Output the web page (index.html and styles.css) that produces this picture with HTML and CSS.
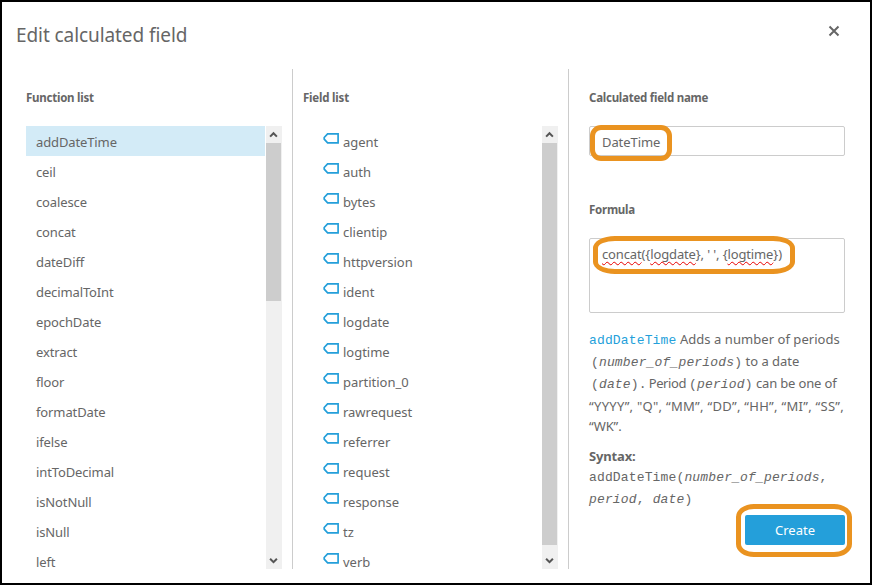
FILE: index.html
```html
<!DOCTYPE html>
<html lang="en">
<head>
<meta charset="utf-8">
<title>Edit calculated field</title>
<link rel="stylesheet" href="styles.css">
</head>
<body>
<svg class="defs" width="0" height="0">
  <symbol id="tag" viewBox="0 0 17 12"><path d="M4.6 1.8H15.1V10.9H4.6L1.2 7.2V5.5Z" fill="#fff" stroke="#249fda" stroke-width="1.7"/></symbol>
  <symbol id="up" viewBox="0 0 16 17"><path d="M4.1 10.6L7.5 7.2L10.9 10.6" fill="none" stroke="#555" stroke-width="2"/></symbol>
  <symbol id="down" viewBox="0 0 16 17"><path d="M4.1 6.7L7.5 10.1L10.9 6.7" fill="none" stroke="#555" stroke-width="2"/></symbol>
</svg>
<main class="dialog">
  <header class="header">
    <h1 class="title">Edit calculated field</h1>
    <svg class="close" width="12" height="12" viewBox="0 0 12 12"><path d="M1.5 1.5L10.5 10.5M10.5 1.5L1.5 10.5" stroke="#666" stroke-width="2"/></svg>
  </header>
  <div class="columns">
    <section class="column functions">
      <h2 class="label">Function list</h2>
      <div class="listbox">
        <ul class="items">
          <li class="item selected">addDateTime</li>
          <li class="item">ceil</li>
          <li class="item">coalesce</li>
          <li class="item">concat</li>
          <li class="item">dateDiff</li>
          <li class="item">decimalToInt</li>
          <li class="item">epochDate</li>
          <li class="item">extract</li>
          <li class="item">floor</li>
          <li class="item">formatDate</li>
          <li class="item">ifelse</li>
          <li class="item">intToDecimal</li>
          <li class="item">isNotNull</li>
          <li class="item">isNull</li>
          <li class="item">left</li>
        </ul>
        <div class="scrollbar"><svg class="arrow"><use href="#up"/></svg><div class="thumb short"></div><svg class="arrow last"><use href="#down"/></svg></div>
      </div>
    </section>
    <section class="column fields">
      <h2 class="label">Field list</h2>
      <div class="listbox">
        <ul class="items">
          <li class="item"><svg class="tag"><use href="#tag"/></svg>agent</li>
          <li class="item"><svg class="tag"><use href="#tag"/></svg>auth</li>
          <li class="item"><svg class="tag"><use href="#tag"/></svg>bytes</li>
          <li class="item"><svg class="tag"><use href="#tag"/></svg>clientip</li>
          <li class="item"><svg class="tag"><use href="#tag"/></svg>httpversion</li>
          <li class="item"><svg class="tag"><use href="#tag"/></svg>ident</li>
          <li class="item"><svg class="tag"><use href="#tag"/></svg>logdate</li>
          <li class="item"><svg class="tag"><use href="#tag"/></svg>logtime</li>
          <li class="item"><svg class="tag"><use href="#tag"/></svg>partition_0</li>
          <li class="item"><svg class="tag"><use href="#tag"/></svg>rawrequest</li>
          <li class="item"><svg class="tag"><use href="#tag"/></svg>referrer</li>
          <li class="item"><svg class="tag"><use href="#tag"/></svg>request</li>
          <li class="item"><svg class="tag"><use href="#tag"/></svg>response</li>
          <li class="item"><svg class="tag"><use href="#tag"/></svg>tz</li>
          <li class="item"><svg class="tag"><use href="#tag"/></svg>verb</li>
        </ul>
        <div class="scrollbar"><svg class="arrow"><use href="#up"/></svg><div class="thumb"></div><svg class="arrow last"><use href="#down"/></svg></div>
      </div>
    </section>
    <section class="column editor">
      <h2 class="label">Calculated field name</h2>
      <div class="box name"><span>DateTime</span><i class="mark mark-name"></i></div>
      <h2 class="label">Formula</h2>
      <div class="box formula"><span><span class="typo">concat</span>({<span class="typo">logdate</span>}, ' ', {<span class="typo">logtime</span>})</span><i class="mark mark-formula"></i></div>
      <div class="help">
        <p class="line intro"><code class="blue">addDateTime</code> Adds a number of periods</p>
        <p class="line args"><code class="inset">(<em>number_of_periods</em>)</code> to a date</p>
        <p class="line"><code class="inset">(<em>date</em>).</code><span class="tight">Period </span><code>(<em>period</em>)</code> can be one of</p>
        <p class="line codes">“YYYY”, "Q", “MM”, “DD”, “HH”, “MI”, “SS”,</p>
        <p class="line wk">“WK”.</p>
        <p class="line syntax">Syntax:</p>
        <p class="line"><code>addDateTime(<em>number_of_periods</em>,</code></p>
        <p class="line"><code><em>period</em>, <em>date</em>)</code></p>
      </div>
      <div class="actions"><button class="create">Create</button><i class="mark mark-create"></i></div>
    </section>
  </div>
</main>
</body>
</html>
```
FILE: styles.css
```css
* { box-sizing: border-box; margin: 0; padding: 0; }
body { font: 13px/20px "Noto Sans", "Open Sans", sans-serif; color: #666; background: #fff; overflow: hidden; }
.defs { position: absolute; }
.dialog { width: 872px; height: 585px; border: 2px solid #000; }
.header { height: 67px; display: flex; justify-content: space-between; padding: 19px 30px 0 14px; }
.title { font-size: 19px; line-height: 28px; font-weight: 400; letter-spacing: -0.08px; }
.close { margin-top: 4px; }
.columns { display: flex; height: 500px; }
.column { display: flex; flex-direction: column; }
.functions { width: 291px; padding: 0 10px 0 24px; border-right: 1px solid #ccc; }
.fields { width: 276px; padding: 0 10px 0 10px; border-right: 1px solid #ccc; }
.editor { width: 276px; padding-left: 20px; }
.label { height: 57px; flex: none; padding-top: 19px; font-size: 11.5px; line-height: 20px; font-weight: 700; letter-spacing: -0.25px; white-space: nowrap; }
.fields .label { letter-spacing: -0.2px; }
.listbox { display: flex; height: 443px; justify-content: space-between; }
.items { list-style: none; flex: 1; margin-right: 1px; }
.item { height: 30px; padding: 6px 10px 0; line-height: 20px; letter-spacing: -0.12px; white-space: nowrap; }
.selected { background: #d3ebf7; }
.fields .item { display: flex; padding-left: 20px; letter-spacing: -0.02px; }
.tag { width: 17px; height: 12px; margin: 0 3px 0 0; }
.scrollbar { width: 16px; background: #f0f0f0; display: flex; flex-direction: column; }
.arrow { width: 16px; height: 17px; flex: none; }
.last { margin-top: auto; }
.thumb { width: 15px; height: 402px; background: #cdcdcd; }
.thumb.short { height: 158px; }
.box { position: relative; border: 1px solid #ccc; border-radius: 2px; padding-left: 12px; white-space: nowrap; flex: none; }
.name { height: 30px; line-height: 30px; margin-bottom: 25px; letter-spacing: -0.08px; }
.formula { height: 75px; padding-top: 5px; line-height: 20px; letter-spacing: -0.13px; }
.formula + .help { margin-top: 15px; }
.typo { text-decoration: underline wavy #e80000 1px; text-underline-offset: 2px; text-decoration-skip-ink: none; }
.mark { position: absolute; border: 5px solid #ea9320; }
.mark-name { left: 0; top: -2px; width: 82px; height: 36px; border-radius: 11px; }
.mark-formula { left: 3px; top: -3px; width: 202px; height: 38px; border-radius: 22px / 12px; }
.mark-create { right: -7px; top: -11px; width: 116px; height: 53px; border-radius: 18px / 13px; }
.line { height: 22px; line-height: 22px; white-space: nowrap; letter-spacing: -0.15px; }
.help { height: 187px; flex: none; }
.intro { letter-spacing: 0.05px; }
.args { letter-spacing: 0; }
.inset { margin-left: 2px; }
.codes { height: 23px; line-height: 24px; letter-spacing: 0.28px; }
.wk { height: 18px; line-height: 19px; }
.syntax { height: 30px; padding-top: 11px; font-weight: 700; line-height: 20px; }
.tight { margin-left: 2px; letter-spacing: -0.4px; }
code { font: 13px "Courier New", "Liberation Mono", monospace; letter-spacing: 0.15px; }
.blue { color: #249fda; }
.actions { position: relative; display: flex; justify-content: flex-end; }
.create { width: 100px; height: 30px; border: 0; border-radius: 2px; background: #249fda; color: #fff; font: 13px "Noto Sans", sans-serif; }
```
